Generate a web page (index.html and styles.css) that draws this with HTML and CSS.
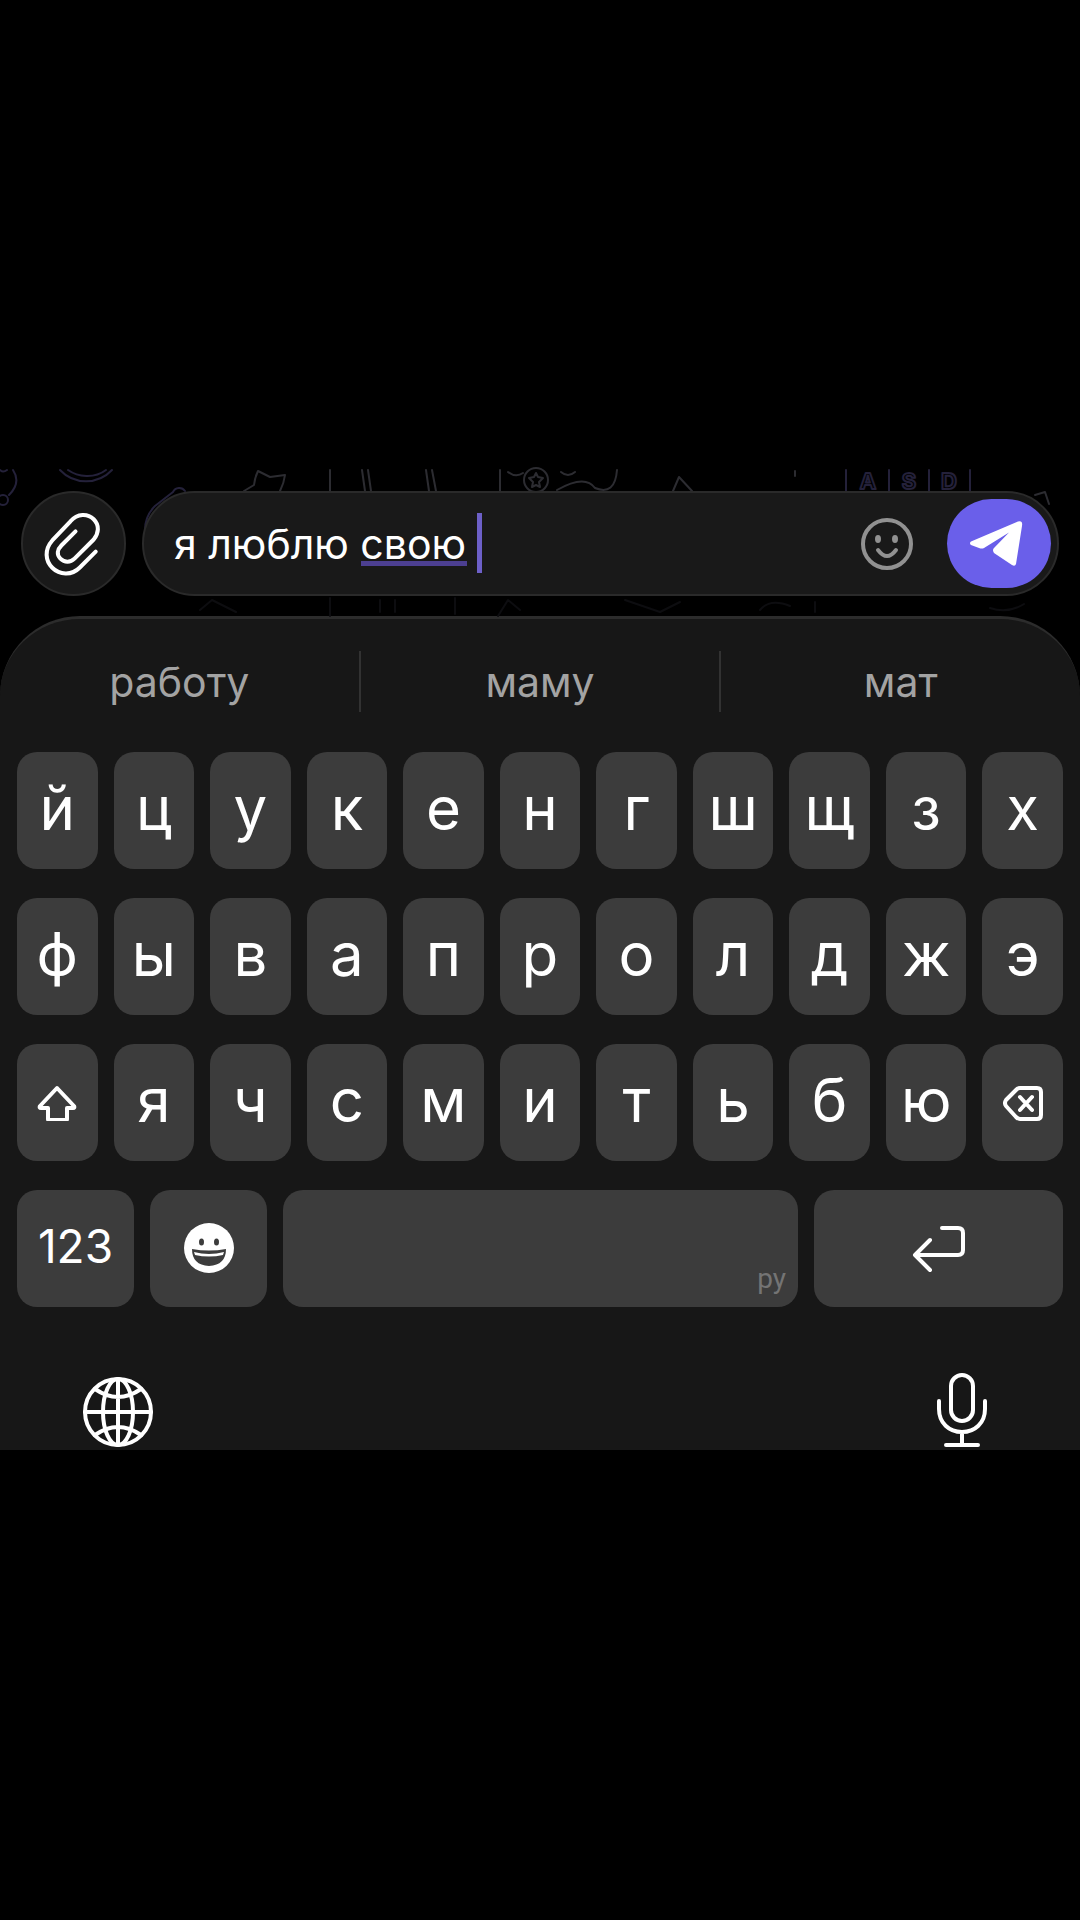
FILE: index.html
```html
<!DOCTYPE html>
<html lang="ru">
<head>
    <meta charset="UTF-8">
    <meta name="viewport" content="width=device-width, initial-scale=1.0">
    <title>Клавиатура</title>
    <link rel="stylesheet" href="styles.css">
</head>
<body>
    <main id="wrap">
        <form class="composer">
            <svg class="doodles" viewBox="0 0 1080 146" aria-hidden="true">
                <g class="violet">
                    <path d="M0 0q3 3 7 0M13 0c6 9 4 17-4 25"/>
                    <circle cx="3" cy="30" r="5"/>
                    <path d="M60 0c14 15 38 15 52 0M68 0c10 7 26 9 38 0"/>
                    <path d="M145 60q0-14 10-24l18-14a7 7 0 0 1 12-1"/>
                </g>
                <g class="gray">
                    <path d="M244 21l10-6q1-8 4-14l12 6 15-2q-1 8-5 16"/>
                    <path d="M330 0v21M362 0l3 21M368 0l3 21M426 0l3 21M432 0l4 21M500 0v21"/>
                    <path d="M508 2q8 6 15 1"/>
                    <circle cx="536" cy="10" r="12"/>
                    <path d="M536 3l2 4 5 1-4 4 1 5-4-2-4 2 1-5-4-4 5-1z"/>
                    <path d="M561 2q7 6 14 0M557 20q28-16 38-2 20 8 22-18"/>
                    <path d="M673 21l6-14 13 14M795 1v5"/>
                    <path d="M1035 25l10-3 4 12"/>
                </g>
                <g class="violet">
                    <path d="M846 0v21M889 0v21M929 0v21M970 0v21"/>
                    <text x="868" y="19">A</text>
                    <text x="909" y="19">S</text>
                    <text x="949" y="19">D</text>
                </g>
                <g class="faint">
                    <path d="M200 140l12-10 24 12M330 128v18M380 130v12M395 130v12M455 128v16M498 146l10-16 12 10"/>
                    <path d="M625 130l35 12 20-10M760 140q10-12 30-4M815 132v10M990 138q18 6 34-4"/>
                </g>
            </svg>

            <button class="attach" type="button" aria-label="Прикрепить файл">
                <svg viewBox="0 0 104 105">
                    <path d="M74 60L58 76c-8 8-20 7-27 0s-8-18 0-27l18-19c7-8 17-8 23-2s5 14 0 20L53 67c-4 4-10 4-14 0s-3-9 1-13l14-14"/>
                </svg>
            </button>

            <div class="field">
                <input class="message" type="text" value="я люблю свою" aria-label="Сообщение">
                <button class="sticker" type="button" aria-label="Эмодзи">
                    <svg viewBox="0 0 52 52">
                        <circle class="line" cx="26" cy="26" r="24"/>
                        <ellipse cx="17" cy="21" rx="3" ry="4"/>
                        <ellipse cx="34" cy="21" rx="3" ry="4"/>
                        <path class="line" d="M17 32q9 12 18 0"/>
                    </svg>
                </button>
                <button class="send" type="submit" aria-label="Отправить">
                    <svg viewBox="0 0 104 89">
                        <path d="M24 42.500L71 22.500Q76 21 75 27L69 65Q68 68 65 66L47 54Q45 51 47 49L62 33.500L37 49Q35 50 32 49L24 46Q22 44 24 42.500Z"/>
                    </svg>
                </button>
            </div>
        </form>

        <section class="keyboard">
            <div class="suggest">
                <button type="button">работу</button>
                <button type="button">маму</button>
                <button type="button">мат</button>
            </div>

            <div class="keys">
                <div class="row">
                    <button class="key" type="button">й</button>
                    <button class="key" type="button">ц</button>
                    <button class="key" type="button">у</button>
                    <button class="key" type="button">к</button>
                    <button class="key" type="button">е</button>
                    <button class="key" type="button">н</button>
                    <button class="key" type="button">г</button>
                    <button class="key" type="button">ш</button>
                    <button class="key" type="button">щ</button>
                    <button class="key" type="button">з</button>
                    <button class="key" type="button">х</button>
                </div>
                <div class="row">
                    <button class="key" type="button">ф</button>
                    <button class="key" type="button">ы</button>
                    <button class="key" type="button">в</button>
                    <button class="key" type="button">а</button>
                    <button class="key" type="button">п</button>
                    <button class="key" type="button">р</button>
                    <button class="key" type="button">о</button>
                    <button class="key" type="button">л</button>
                    <button class="key" type="button">д</button>
                    <button class="key" type="button">ж</button>
                    <button class="key" type="button">э</button>
                </div>
                <div class="row">
                    <button class="key icon" type="button" aria-label="Shift">
                        <svg width="40" height="36" viewBox="0 0 40 36">
                            <path d="M20 3L37 21q1 2-1 2h-6v11q0 1-1 1H12q-1 0-1-1V23H4q-2 0-1-2z"/>
                        </svg>
                    </button>
                    <button class="key" type="button">я</button>
                    <button class="key" type="button">ч</button>
                    <button class="key" type="button">с</button>
                    <button class="key" type="button">м</button>
                    <button class="key" type="button">и</button>
                    <button class="key" type="button">т</button>
                    <button class="key" type="button">ь</button>
                    <button class="key" type="button">б</button>
                    <button class="key" type="button">ю</button>
                    <button class="key icon" type="button" aria-label="Удалить">
                        <svg width="40" height="36" viewBox="0 0 40 36">
                            <path d="M17 3h17q4 0 4 4v23q0 4-4 4H17q-2 0-4-2L3 21q-2-3 0-6L13 5q2-2 4-2zM17 12l12 13M29 12L17 25"/>
                        </svg>
                    </button>
                </div>
                <div class="row bottom">
                    <button class="key num" type="button">123</button>
                    <button class="key icon" type="button" aria-label="Эмодзи">
                        <svg class="smile" width="52" height="52" viewBox="0 0 52 52">
                            <circle cx="26" cy="25" r="25"/>
                            <g class="hole">
                                <ellipse cx="18.500" cy="19" rx="2.500" ry="3.500"/>
                                <ellipse cx="33.500" cy="19" rx="2.500" ry="3.500"/>
                                <path d="M9 26q17 3 34 0q0 16-17 17Q9 42 9 26z"/>
                            </g>
                            <path d="M11 29q15 4 30 0l-1 3q-14 3-28 0z"/>
                        </svg>
                    </button>
                    <button class="key space" type="button" aria-label="Пробел, ру">ру</button>
                    <button class="key icon" type="button" aria-label="Ввод">
                        <svg width="54" height="50" viewBox="0 0 54 50">
                            <path d="M30 4h16q5 0 5 5v17q0 5-5 5H4M18 16L3 31l15 15"/>
                        </svg>
                    </button>
                </div>
            </div>

            <div class="tools">
                <button type="button" aria-label="Сменить язык">
                    <svg width="72" height="72" viewBox="0 0 72 72">
                        <circle cx="36" cy="36" r="33"/>
                        <ellipse cx="36" cy="36" rx="15" ry="33"/>
                        <path d="M36 3v66M3 36h66M13 13q23 16 46 0M13 59q23-16 46 0"/>
                    </svg>
                </button>
                <button type="button" aria-label="Диктовка">
                    <svg width="52" height="76" viewBox="0 0 52 76">
                        <rect x="15" y="3" width="22" height="46" rx="11"/>
                        <path d="M3 29v8c0 14 10 23 23 23s23-9 23-23v-8M26 60v13M10 73h32"/>
                    </svg>
                </button>
            </div>
        </section>
    </main>
</body>
</html>
```

FILE: styles.css
```css
*{
    margin: 0;
    padding: 0;
    box-sizing: border-box;
}
body{
    background-color: #000;
    color: #fff;
    font-family: "Inter", "Roboto", sans-serif;
}
button,input{
    border: 0;
    background: none;
    color: inherit;
    font-family: inherit;
}
button{
    cursor: pointer;
}
svg{
    display: block;
    fill: none;
    stroke: #fff;
    stroke-linecap: round;
    stroke-linejoin: round;
}
#wrap{
    min-height: 100vh;
    display: flex;
    flex-direction: column;
    justify-content: center;
}

/* message bar */
.composer{
    position: relative;
    display: flex;
    gap: 16px;
    padding: 21px 21px 20px;
}
.doodles{
    position: absolute;
    top: 0;
    left: 0;
    width: 100%;
    overflow: visible;
    stroke-width: 2;
}
.doodles .violet{
    stroke: #24213a;
}
.doodles .gray{
    stroke: #2c2c31;
}
.doodles .faint{
    stroke: #0d0d10;
}
.doodles text{
    font-size: 22px;
    font-weight: 700;
    text-anchor: middle;
}
.attach,.field{
    position: relative;
    height: 105px;
    border: 2px solid #2a2a2a;
    background-color: #191919;
}
.attach{
    flex: none;
    width: 105px;
    border-radius: 50%;
}
.attach svg{
    margin: -2px;
    width: 105px;
    stroke-width: 4;
}
.field{
    flex: 1;
    display: flex;
    align-items: center;
    gap: 34px;
    padding: 0 6px 0 30px;
    border-radius: 53px;
}
/* underline of the word being typed and the cursor */
.message{
    flex: 1;
    min-width: 0;
    height: 62px;
    font-size: 41px;
    background-image: linear-gradient(#4c3f91, #4c3f91), linear-gradient(#6d60c8, #6d60c8);
    background-size: 106px 5px, 5px 60px;
    background-position: 187px 48px, 303px 0;
    background-repeat: no-repeat;
    outline: 0;
}
.sticker svg{
    width: 52px;
    fill: #919191;
    stroke: none;
}
.sticker .line{
    fill: none;
    stroke: #919191;
    stroke-width: 4;
}
.send{
    width: 104px;
    height: 89px;
    border-radius: 45px;
    background-color: #6a5fea;
}
.send svg{
    fill: #fff;
    stroke: none;
}

/* keyboard */
.keyboard{
    border-top: 3px solid #2c2c2c;
    border-radius: 80px 80px 0 0;
    background-color: #171717;
}
.suggest{
    display: flex;
    align-items: center;
    height: 133px;
    padding-bottom: 9px;
}
.suggest button{
    flex: 1;
    height: 61px;
    padding-top: 2px;
    font-size: 41px;
    color: #a3a3a3;
}
.suggest button:not(:last-child){
    border-right: 2px solid #323232;
}
.keys{
    display: grid;
    gap: 29px;
    padding: 0 17px;
}
.row{
    display: grid;
    grid-template-columns: repeat(11, 1fr);
    gap: 16px;
}
.row.bottom{
    grid-template-columns: 117px 117px 1fr 249px;
}
.key{
    height: 117px;
    padding-bottom: 5px;
    border-radius: 20px;
    background-color: #3c3c3c;
    font-size: 60px;
}
.key.num{
    font-size: 46px;
}
.key.icon{
    display: flex;
    align-items: center;
    justify-content: center;
    padding: 0;
}
.key.icon svg{
    stroke-width: 4;
}
.key.icon .smile{
    fill: #fff;
    stroke: none;
}
.smile .hole{
    fill: #3c3c3c;
}
.key.space{
    display: flex;
    align-items: flex-end;
    justify-content: flex-end;
    padding: 12px;
    font-family: "Roboto", sans-serif;
    font-size: 28px;
    color: #747474;
}
.tools{
    display: flex;
    justify-content: space-between;
    align-items: flex-end;
    height: 143px;
    padding: 0 92px 2px 82px;
}
.tools svg{
    stroke-width: 4;
}
```
